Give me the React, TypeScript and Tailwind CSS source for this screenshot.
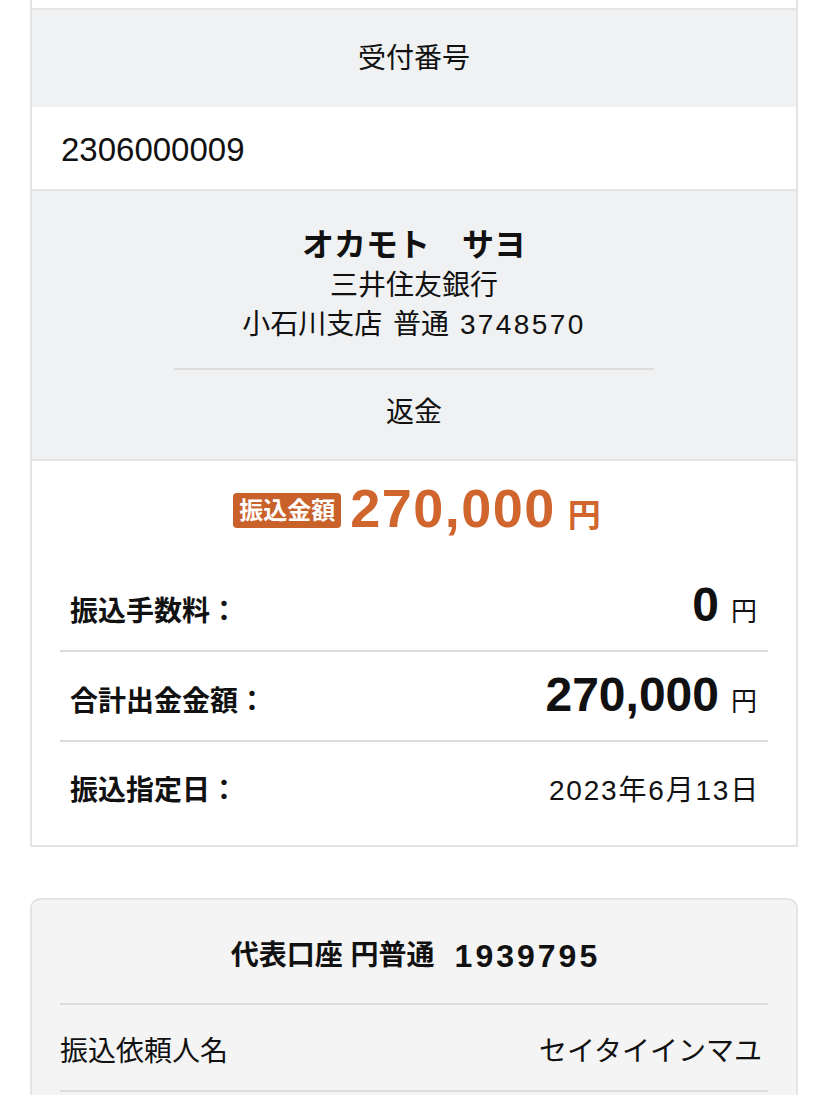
const font = "font-['Liberation_Sans','Noto_Sans_CJK_JP',sans-serif]";

const Yen = () => <span className="ml-[12px] text-[26px] font-normal leading-none">円</span>;

export default function App() {
  return (
    <div className={`min-h-screen bg-white px-[30px] text-[#111] ${font}`}>
      {/* transfer detail card */}
      <div className="border-x-2 border-b-2 border-[#e4e4e4]">
        <div className="h-[10px] border-b-2 border-[#e4e4e4] bg-white" />

        <div className="flex h-[97px] items-center justify-center bg-[#f0f1f3] text-[28px]">
          受付番号
        </div>
        <div className="flex h-[84px] items-center border-b-2 border-[#e4e4e4] bg-white px-[29px] pt-[3px] text-[33px]">
          2306000009
        </div>

        <div className="flex h-[270px] flex-col items-center border-b-2 border-[#e4e4e4] bg-[#f0f1f3] pt-[33px]">
          <div className="text-[32px] font-bold leading-[42px]">オカモト　サヨ</div>
          <div className="text-[28px] leading-[40px]">三井住友銀行</div>
          <div className="text-[28px] leading-[38px] [word-spacing:3px]">
            小石川支店 普通 <span className="tracking-[2.4px]">3748570</span>
          </div>
          <div className="mt-[24px] h-[2px] w-[480px] bg-[#dcdcdc]" />
          <div className="mt-[23px] text-[28px] leading-[40px]">返金</div>
        </div>

        <div className="bg-white px-[28px]">
          <div className="flex h-[100px] items-end justify-center pb-[26px] pl-[6px]">
            <span className="mb-[7px] mr-[9px] rounded-[4px] bg-[#c9612b] px-[6px] py-[3px] text-[24px] font-bold leading-[29px] text-white">
              振込金額
            </span>
            <span className="text-[54px] font-bold leading-none tracking-[1.5px] text-[#d0652e]">270,000</span>
            <span className="mb-[3px] ml-[12px] text-[33px] font-bold leading-none text-[#d0652e]">円</span>
          </div>

          <div className="flex h-[91px] items-baseline justify-between border-b-2 border-[#dcdcdc] pl-[10px] pr-[11px] pt-[20px]">
            <span className="text-[28px] font-bold leading-none">振込手数料：</span>
            <span>
              <span className="text-[48px] font-bold leading-none">0</span>
              <Yen />
            </span>
          </div>

          <div className="flex h-[90px] items-baseline justify-between border-b-2 border-[#dcdcdc] pl-[10px] pr-[11px] pt-[19px]">
            <span className="text-[28px] font-bold leading-none">合計出金金額：</span>
            <span>
              <span className="text-[48px] font-bold leading-none">270,000</span>
              <Yen />
            </span>
          </div>

          <div className="flex h-[103px] items-baseline justify-between pl-[10px] pr-[11px] pt-[35px]">
            <span className="text-[28px] font-bold leading-none">振込指定日：</span>
            <span className="-mr-[3px] text-[28px] leading-none tracking-[1.8px]">2023年6月13日</span>
          </div>
        </div>
      </div>

      {/* account card */}
      <div className="mt-[51px] rounded-[10px] border-2 border-[#e4e4e4] bg-[#f4f4f4] px-[28px]">
        <div className="flex h-[105px] items-center justify-center border-b-2 border-[#dcdcdc] pl-[3px] pt-[8px] font-bold">
          <span className="text-[28px]">代表口座 円普通</span>
          <span className="ml-[20px] text-[32px] tracking-[3px]">1939795</span>
        </div>
        <div className="flex h-[87px] items-center justify-between border-b-2 border-[#dcdcdc] pt-[8px] text-[28px]">
          <span>振込依頼人名</span>
          <span className="pr-[6px]">セイタイインマユ</span>
        </div>
        <div className="h-[40px]" />
      </div>
    </div>
  );
}
